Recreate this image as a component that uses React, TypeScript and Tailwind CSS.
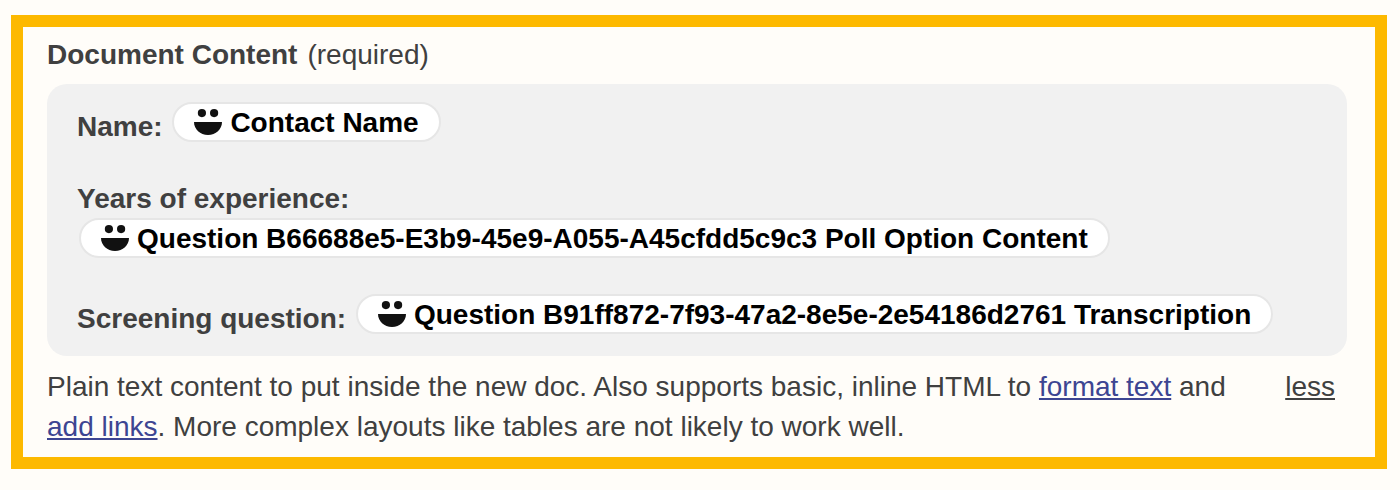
import type { ReactNode } from "react";

function SmileIcon() {
    return (
        <svg width="28" height="26" viewBox="0 0 28 26" fill="#111111" className="shrink-0">
            <circle cx="7.9" cy="4.1" r="4.1" />
            <circle cx="20.1" cy="4.1" r="4.1" />
            <path d="M0 13h28c0 7.2-6.2 13-14 13S0 20.2 0 13z" />
        </svg>
    );
}

function Pill({ children }: { children: ReactNode }) {
    return (
        <span className="inline-flex h-10 items-center gap-2 whitespace-nowrap rounded-full border-2 border-[#e6e6e6] bg-white px-5 leading-9 text-black">
            <SmileIcon />
            <span className="pt-0.5">{children}</span>
        </span>
    );
}

export default function App() {
    return (
        <div className="h-[490px] w-[1400px] bg-[#fffdf9] pl-[11px] pt-[15px] font-['Liberation_Sans',Arial,sans-serif] text-[28px] leading-10 text-[#404040]">
            <div className="h-[454px] w-[1376px] border-[12px] border-[#fdb900] px-6 pt-2">
                <div className="flex h-[49px] gap-[10px]">
                    <span className="font-bold">Document Content</span>
                    <span>(required)</span>
                </div>

                <div className="flex h-[272px] w-[1300px] flex-col rounded-[20px] bg-[#f1f1f1] pl-[30px] pt-[18px] font-bold">
                    <div className="flex h-[76px] gap-[9.8px]">
                        <span className="pt-[5px]">Name:</span>
                        <Pill>Contact Name</Pill>
                    </div>
                    <div className="h-10 pt-px">Years of experience:</div>
                    <div className="flex h-[76px] pl-[2px]">
                        <Pill>Question B66688e5-E3b9-45e9-A055-A45cfdd5c9c3 Poll Option Content</Pill>
                    </div>
                    <div className="flex gap-[9.8px]">
                        <span className="pt-[5px]">Screening question:</span>
                        <Pill>Question B91ff872-7f93-47a2-8e5e-2e54186d2761 Transcription</Pill>
                    </div>
                </div>

                <div className="flex w-[1288px] justify-between pt-[11px]">
                    <p className="w-[1200px]">
                        Plain text content to put inside the new doc. Also supports basic, inline HTML to{" "}
                        <a href="#" className="text-[#3d4592] underline decoration-2 underline-offset-2">format text</a> and
                        <br />
                        <a href="#" className="text-[#3d4592] underline decoration-2 underline-offset-2">add links</a>. More
                        complex layouts like tables are not likely to work well.
                    </p>
                    <button className="h-10 underline decoration-2 underline-offset-2">less</button>
                </div>
            </div>
        </div>
    );
}
